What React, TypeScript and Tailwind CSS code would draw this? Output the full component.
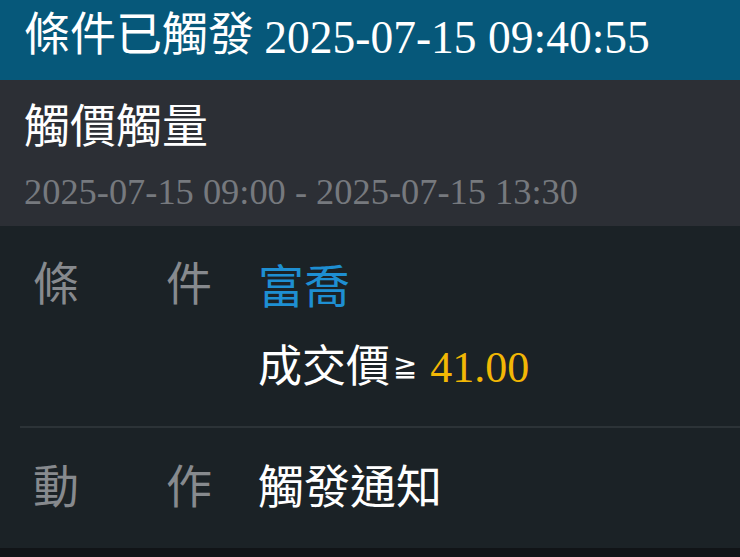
import React from "react";

const CJK = "font-['Noto_Sans_CJK_TC','Noto_Sans_CJK_SC',sans-serif]";
const SERIF = "font-['Liberation_Serif','Times_New_Roman',serif]";

export default function App() {
  return (
    <div className={`w-[740px] h-[557px] flex flex-col ${CJK}`}>
      {/* header */}
      <div className="h-[80px] shrink-0 bg-[#06587a] flex items-center px-6 pb-3">
        <div className="text-white text-[46px] leading-[46px] whitespace-nowrap">
          條件已觸發{" "}
          <span className={`${SERIF} text-[45.5px] align-[-3px]`}>2025-07-15 09:40:55</span>
        </div>
      </div>

      {/* subtitle band */}
      <div className="h-[146px] shrink-0 bg-[#2c2f35] px-6 pt-[19px]">
        <div className="text-white text-[46px] leading-[46px]">觸價觸量</div>
        <div className={`${SERIF} text-[#76797e] text-[36.4px] leading-[36px] mt-[29px] whitespace-nowrap`}>
          2025-07-15 09:00 - 2025-07-15 13:30
        </div>
      </div>

      {/* body */}
      <div className="flex-1 bg-[#1b2226] flex flex-col">
        <div className="flex pt-[31px] pl-[33px]">
          <div className="w-[179px] flex justify-between text-[#878a8e] text-[46px] leading-[46px]">
            <span>條</span>
            <span>件</span>
          </div>
          <div className="ml-[46px] flex flex-col">
            <div className="text-[#1e8fd2] text-[46px] leading-[46px] mt-[3px]">富喬</div>
            <div className="mt-[35px] h-[44px] whitespace-nowrap text-white text-[44px] leading-[44px]">
              <span>成交價</span>
              <span className="font-['DejaVu_Sans',sans-serif] text-[29px] ml-[3px] align-[6px]">≧</span>
              <span className={`${SERIF} text-[#f2b705] text-[44px] ml-[13px]`}>41.00</span>
            </div>
          </div>
        </div>

        <div className="ml-5 mt-[41px] h-[2px] bg-[#2c3337]" />

        <div className="flex pt-[32px] pl-[33px]">
          <div className="w-[179px] flex justify-between text-[#878a8e] text-[46px] leading-[46px]">
            <span>動</span>
            <span>作</span>
          </div>
          <div className="ml-[46px] text-white text-[46px] leading-[46px]">觸發通知</div>
        </div>
      </div>

      {/* bottom strip */}
      <div className="h-[9px] shrink-0 bg-[#111417]" />
    </div>
  );
}
